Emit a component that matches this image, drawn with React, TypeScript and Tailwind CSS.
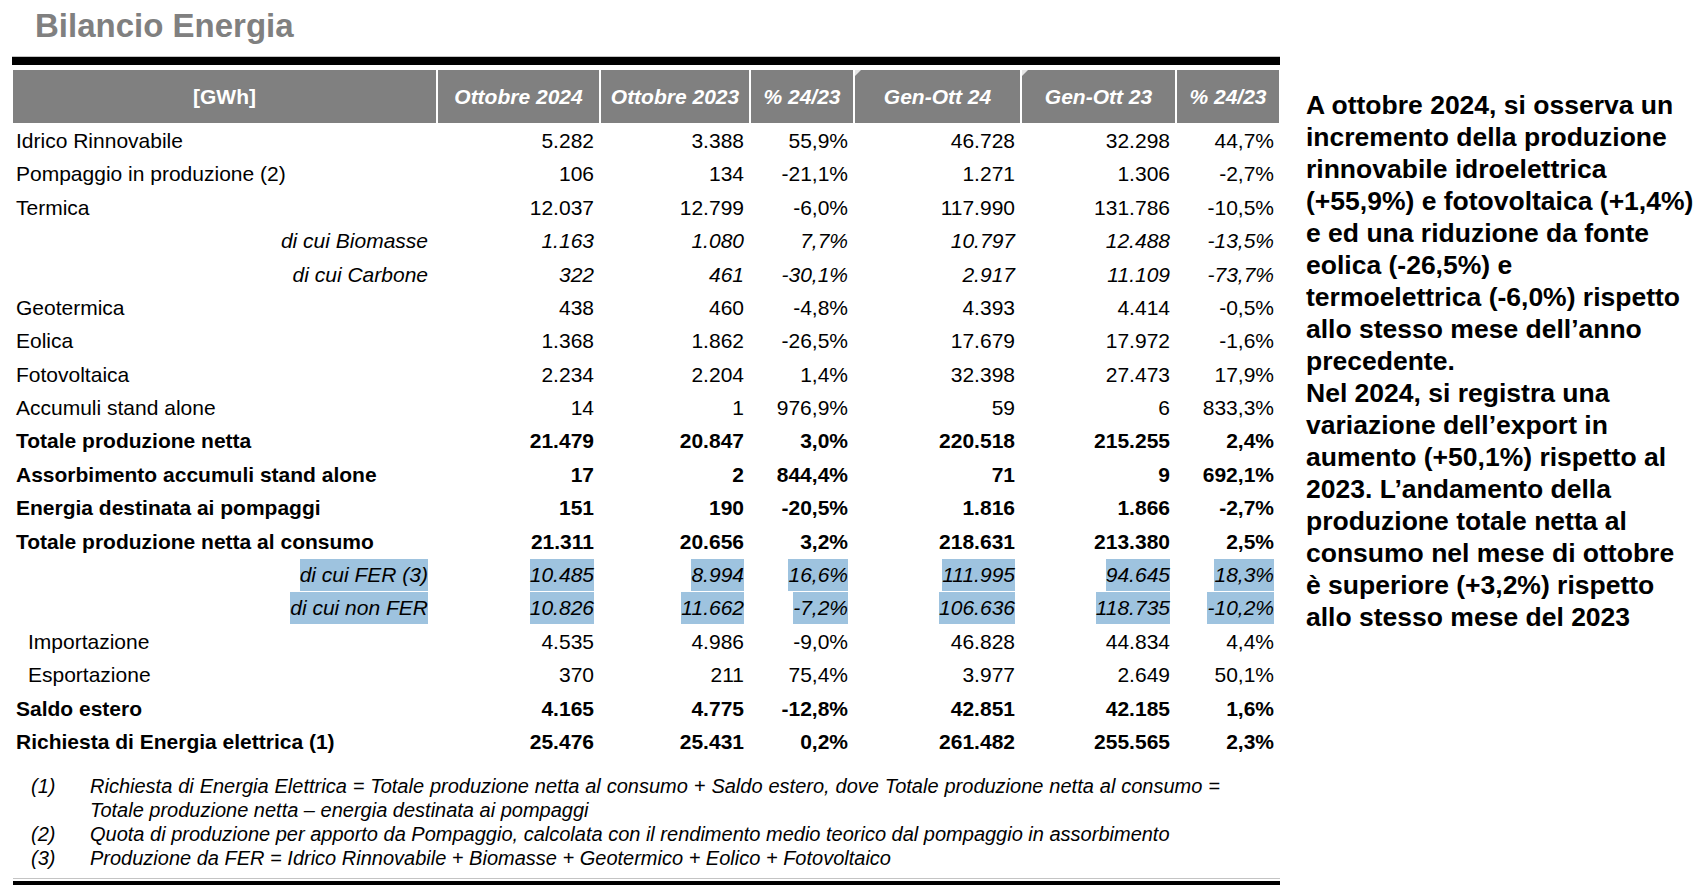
import React from "react";

type Row = {
  label: string;
  v: string[];
  kind?: "bold" | "italic" | "hl" | "indent";
};

const rows: Row[] = [
  { label: "Idrico Rinnovabile", v: ["5.282", "3.388", "55,9%", "46.728", "32.298", "44,7%"] },
  { label: "Pompaggio in produzione (2)", v: ["106", "134", "-21,1%", "1.271", "1.306", "-2,7%"] },
  { label: "Termica", v: ["12.037", "12.799", "-6,0%", "117.990", "131.786", "-10,5%"] },
  { label: "di cui Biomasse", v: ["1.163", "1.080", "7,7%", "10.797", "12.488", "-13,5%"], kind: "italic" },
  { label: "di cui Carbone", v: ["322", "461", "-30,1%", "2.917", "11.109", "-73,7%"], kind: "italic" },
  { label: "Geotermica", v: ["438", "460", "-4,8%", "4.393", "4.414", "-0,5%"] },
  { label: "Eolica", v: ["1.368", "1.862", "-26,5%", "17.679", "17.972", "-1,6%"] },
  { label: "Fotovoltaica", v: ["2.234", "2.204", "1,4%", "32.398", "27.473", "17,9%"] },
  { label: "Accumuli stand alone", v: ["14", "1", "976,9%", "59", "6", "833,3%"] },
  { label: "Totale produzione netta", v: ["21.479", "20.847", "3,0%", "220.518", "215.255", "2,4%"], kind: "bold" },
  { label: "Assorbimento accumuli stand alone", v: ["17", "2", "844,4%", "71", "9", "692,1%"], kind: "bold" },
  { label: "Energia destinata ai pompaggi", v: ["151", "190", "-20,5%", "1.816", "1.866", "-2,7%"], kind: "bold" },
  { label: "Totale produzione netta al consumo", v: ["21.311", "20.656", "3,2%", "218.631", "213.380", "2,5%"], kind: "bold" },
  { label: "di cui FER (3)", v: ["10.485", "8.994", "16,6%", "111.995", "94.645", "18,3%"], kind: "hl" },
  { label: "di cui non FER", v: ["10.826", "11.662", "-7,2%", "106.636", "118.735", "-10,2%"], kind: "hl" },
  { label: "Importazione", v: ["4.535", "4.986", "-9,0%", "46.828", "44.834", "4,4%"], kind: "indent" },
  { label: "Esportazione", v: ["370", "211", "75,4%", "3.977", "2.649", "50,1%"], kind: "indent" },
  { label: "Saldo estero", v: ["4.165", "4.775", "-12,8%", "42.851", "42.185", "1,6%"], kind: "bold" },
  { label: "Richiesta di Energia elettrica (1)", v: ["25.476", "25.431", "0,2%", "261.482", "255.565", "2,3%"], kind: "bold" },
];

const headers = ["Ottobre 2024", "Ottobre 2023", "% 24/23", "Gen-Ott 24", "Gen-Ott 23", "% 24/23"];

const rightLines = [
  "A ottobre 2024, si osserva un",
  "incremento della produzione",
  "rinnovabile idroelettrica",
  "(+55,9%) e fotovoltaica (+1,4%)",
  "e ed una riduzione da fonte",
  "eolica (-26,5%) e",
  "termoelettrica (-6,0%) rispetto",
  "allo stesso mese dell\u2019anno",
  "precedente.",
  "Nel 2024, si registra una",
  "variazione dell\u2019export in",
  "aumento (+50,1%) rispetto al",
  "2023. L\u2019andamento della",
  "produzione totale netta al",
  "consumo nel mese di ottobre",
  "\u00e8 superiore (+3,2%) rispetto",
  "allo stesso mese del 2023",
];

const grid = "grid grid-cols-[423px_163px_150px_104px_167px_155px_104px]";

function Cell({ text, kind, label }: { text: string; kind?: Row["kind"]; label?: boolean }) {
  const italic = kind === "italic" || kind === "hl";
  const bold = kind === "bold";
  let cls = "flex items-center h-full whitespace-nowrap ";
  if (label) {
    if (italic) cls += "justify-end pr-[8px] ";
    else if (kind === "indent") cls += "pl-[15px] ";
    else cls += "pl-[3px] ";
  } else {
    cls += "justify-end pr-[5px] ";
  }
  const tcls = (italic ? "italic " : "") + (bold ? "font-bold " : "") + (kind === "hl" ? "bg-[#9ec3df]" : "");
  return (
    <div className={cls}>
      <span className={tcls}>{text}</span>
    </div>
  );
}

export default function App() {
  return (
    <div className="w-[1701px] h-[888px] bg-white flex text-black font-['Liberation_Sans',Arial,sans-serif] overflow-hidden">
      <div className="w-[1292px] flex flex-col shrink-0">
        <div className="h-[56px] pl-[35px] pt-[7px] text-[33px] leading-[37px] font-bold text-[#808080]">
          Bilancio Energia
        </div>
        <div className="ml-[12px] w-[1268px] h-[1px] bg-[#c4c4c4]" />
        <div className="ml-[12px] w-[1268px] h-[8px] bg-black" />
        <div className="h-[5px]" />
        <div className={grid + " ml-[13px] h-[53px] text-white font-bold text-[21px]"}>
          <div className="bg-[#808080] flex items-center justify-center">[GWh]</div>
          {headers.map((h, i) => (
            <div
              key={i}
              className="relative bg-[#808080] border-l-2 border-white flex items-center justify-center italic whitespace-nowrap"
            >
              {(i === 3 || i === 4) && (
                <div className="absolute left-0 top-0 w-0 h-0 border-t-[6px] border-t-[#e6e6e6] border-r-[6px] border-r-transparent" />
              )}
              {h}
            </div>
          ))}
        </div>
        <div className="mt-[1px] ml-[13px] text-[21px]">
          {rows.map((r, i) => (
            <div key={i} className={grid + " h-[33.4px]"}>
              <Cell text={r.label} kind={r.kind} label />
              {r.v.map((v, j) => (
                <Cell key={j} text={v} kind={r.kind} />
              ))}
            </div>
          ))}
        </div>
        <div className="mt-[17px] text-[20px] leading-[23.8px] italic">
          <div className="flex">
            <div className="pl-[31px] w-[90px] shrink-0">(1)</div>
            <div>
              <div className="w-[1130px] text-justify [text-align-last:justify] whitespace-nowrap">
                Richiesta di Energia Elettrica = Totale produzione netta al consumo + Saldo estero, dove Totale produzione netta al consumo =
              </div>
              <div>Totale produzione netta – energia destinata ai pompaggi</div>
            </div>
          </div>
          <div className="flex">
            <div className="pl-[31px] w-[90px] shrink-0">(2)</div>
            <div>Quota di produzione per apporto da Pompaggio, calcolata con il rendimento medio teorico dal pompaggio in assorbimento</div>
          </div>
          <div className="flex">
            <div className="pl-[31px] w-[90px] shrink-0">(3)</div>
            <div>Produzione da FER = Idrico Rinnovabile + Biomasse + Geotermico + Eolico + Fotovoltaico</div>
          </div>
        </div>
        <div className="mt-[7px] ml-[13px] w-[1267px] h-[1px] bg-[#c4c4c4]" />
        <div className="mt-[2px] ml-[13px] w-[1267px] h-[4px] bg-black" />
      </div>
      <div className="pl-[14px] pt-[89px] text-[26.5px] leading-[32px] font-bold">
        {rightLines.map((l, i) => (
          <div key={i} className="whitespace-nowrap">
            {l}
          </div>
        ))}
      </div>
    </div>
  );
}
